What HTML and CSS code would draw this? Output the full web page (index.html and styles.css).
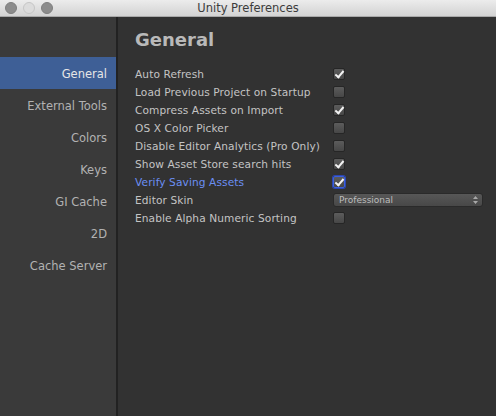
FILE: index.html
```html
<!DOCTYPE html>
<html lang="en">

<head>
    <meta charset="UTF-8">
    <title>Unity Preferences</title>
    <link rel="stylesheet" href="styles.css">
</head>

<body>
    <div class="window">
        <div class="titlebar">
            <div class="lights">
                <span class="light"></span>
                <span class="light off"></span>
                <span class="light"></span>
            </div>
            <div class="title">Unity Preferences</div>
        </div>

        <div class="content">
            <div class="sidebar">
                <div class="nav selected">General</div>
                <div class="nav">External Tools</div>
                <div class="nav">Colors</div>
                <div class="nav">Keys</div>
                <div class="nav">GI Cache</div>
                <div class="nav">2D</div>
                <div class="nav">Cache Server</div>
            </div>

            <div class="main">
                <h1>General</h1>

                <div class="row">
                    <span class="label">Auto Refresh</span>
                    <span class="check checked"></span>
                </div>
                <div class="row">
                    <span class="label">Load Previous Project on Startup</span>
                    <span class="check"></span>
                </div>
                <div class="row">
                    <span class="label">Compress Assets on Import</span>
                    <span class="check checked"></span>
                </div>
                <div class="row">
                    <span class="label">OS X Color Picker</span>
                    <span class="check"></span>
                </div>
                <div class="row">
                    <span class="label">Disable Editor Analytics (Pro Only)</span>
                    <span class="check"></span>
                </div>
                <div class="row">
                    <span class="label">Show Asset Store search hits</span>
                    <span class="check checked"></span>
                </div>
                <div class="row">
                    <span class="label focus">Verify Saving Assets</span>
                    <span class="check checked focused"></span>
                </div>
                <div class="row">
                    <span class="label">Editor Skin</span>
                    <div class="select">
                        <span>Professional</span>
                        <svg width="5" height="8" viewBox="0 0 5 8">
                            <path d="M2.5 0 L5 3 H0 Z M0 5 H5 L2.5 8 Z" fill="#a8a8a8"/>
                        </svg>
                    </div>
                </div>
                <div class="row">
                    <span class="label">Enable Alpha Numeric Sorting</span>
                    <span class="check"></span>
                </div>
            </div>
        </div>
    </div>
</body>

</html>
```

FILE: styles.css
```css
html, body {
    height: 100%;
}

body {
    margin: 0;
    padding: 0;
    background-color: #323232;
    font-family: "DejaVu Sans", sans-serif;
    overflow: hidden;
}

.window {
    height: 100%;
    display: flex;
    flex-direction: column;
}

.titlebar {
    height: 16px;
    flex-shrink: 0;
    display: flex;
    align-items: center;
    background: linear-gradient(#ececec, #d3d3d3);
    border-bottom: 1px solid #a9a9a9;
    position: relative;
}

.lights {
    display: flex;
    gap: 6px;
    padding-left: 5px;
}

.light {
    width: 12px;
    height: 12px;
    border-radius: 50%;
    background-color: #8c8c8c;
    box-sizing: border-box;
    border: 1px solid #7f7f7f;
}

.light.off {
    background-color: #dcdcdc;
    border-color: #c6c6c6;
}

.title {
    position: absolute;
    left: 0;
    right: 0;
    text-align: center;
    font-size: 11.5px;
    color: #3c3c3c;
}

.content {
    flex: 1;
    display: flex;
}

.sidebar {
    width: 118px;
    flex-shrink: 0;
    background-color: #3a3a3a;
    border-right: 2px solid #222;
    padding-top: 40px;
    box-sizing: border-box;
}

.nav {
    height: 32px;
    line-height: 34px;
    text-align: right;
    padding-right: 9px;
    font-size: 11.5px;
    color: #b2b2b2;
}

.nav.selected {
    background-color: #3e5f96;
    color: #e6e6e6;
}

.main {
    flex: 1;
    padding: 8px 0 0 17px;
}

h1 {
    margin: 0 0 10px;
    height: 30px;
    line-height: 30px;
    font-size: 18px;
    color: #b9b9b9;
}

.row {
    height: 18px;
    display: flex;
    align-items: center;
}

.label {
    width: 198px;
    font-size: 10.6px;
    letter-spacing: 0.1px;
    color: #c4c4c4;
}

.label.focus {
    color: #6b8ff2;
}

.check {
    width: 12px;
    height: 12px;
    box-sizing: border-box;
    border-radius: 2px;
    background: linear-gradient(#5c5c5c, #474747);
    border: 1px solid #262626;
    position: relative;
}

.check.checked::after {
    content: "";
    position: absolute;
    left: 3px;
    top: 0;
    width: 3px;
    height: 7px;
    border: solid #f2f2f2;
    border-width: 0 2px 2px 0;
    transform: rotate(40deg);
}

.check.focused {
    border: 1px solid #3a5fe0;
    box-shadow: 0 0 0 1px #2c47b0;
}

.select {
    width: 150px;
    height: 14px;
    box-sizing: border-box;
    border-radius: 3px;
    background: linear-gradient(#575757, #484848);
    border: 1px solid #2a2a2a;
    display: flex;
    align-items: center;
    justify-content: space-between;
    padding: 0 4px 0 5px;
    font-size: 9px;
    color: #bdbdbd;
}
```
